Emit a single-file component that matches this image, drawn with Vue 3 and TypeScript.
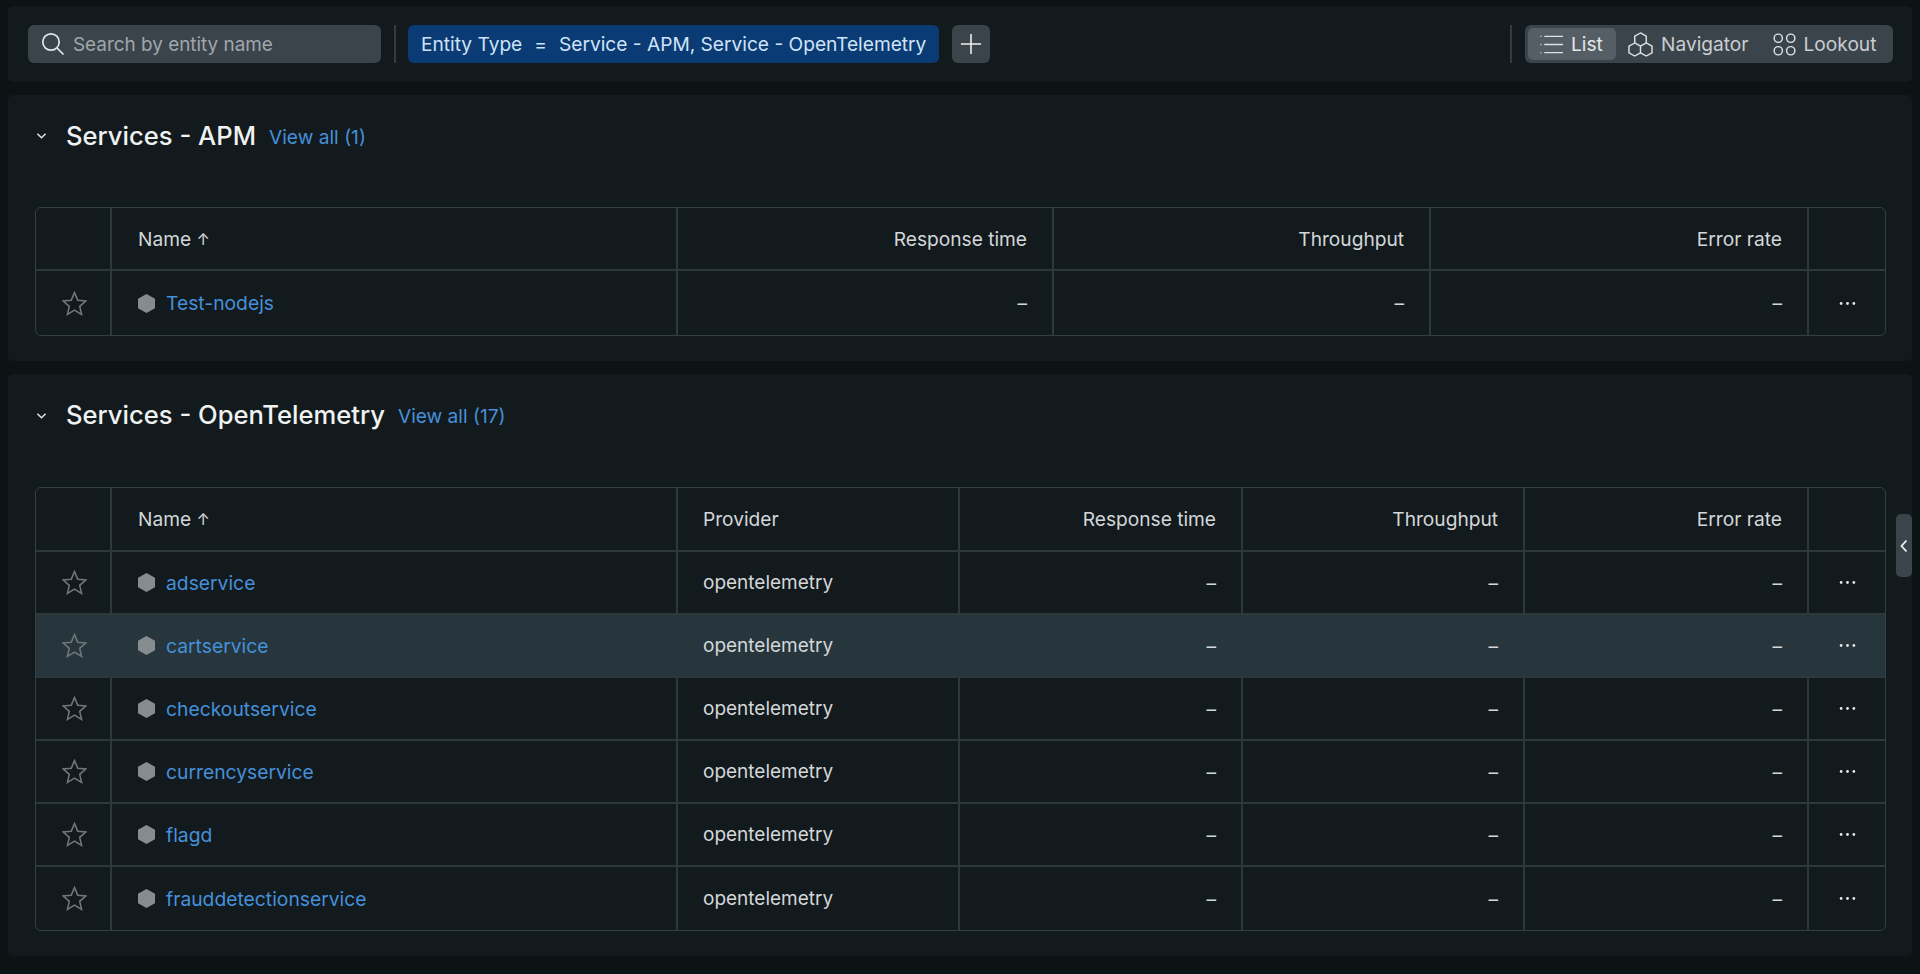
<script setup lang="ts">
interface Section {
  title: string
  viewAll: string
  kind: 'apm' | 'otel'
  rows: string[]
}

const sections: Section[] = [
  { title: 'Services - APM', viewAll: 'View all (1)', kind: 'apm', rows: ['Test-nodejs'] },
  {
    title: 'Services - OpenTelemetry',
    viewAll: 'View all (17)',
    kind: 'otel',
    rows: ['adservice', 'cartservice', 'checkoutservice', 'currencyservice', 'flagd', 'frauddetectionservice'],
  },
]

const metrics = ['Response time', 'Throughput', 'Error rate']
const hoveredRow = 'cartservice'
</script>

<template>
  <div class="page">
    <header class="toolbar">
      <div class="search">
        <svg class="search-icon" viewBox="0 0 24 24" fill="none">
          <circle cx="10" cy="10" r="8.2" />
          <path d="M16 16l6.5 6.5" />
        </svg>
        <span>Search by entity name</span>
      </div>
      <span class="divider" />
      <div class="chip">
        <span>Entity Type</span>
        <span>=</span>
        <span>Service - APM, Service - OpenTelemetry</span>
      </div>
      <button class="add-btn">
        <svg viewBox="0 0 24 24" fill="none"><path d="M12 1v22M1 12h22" /></svg>
      </button>
      <span class="spacer" />
      <span class="divider" />
      <div class="views">
        <div class="view view-active">
          <svg class="view-icon" viewBox="0 0 24 24" fill="none">
            <path d="M4.5 3.5H24M4.5 12H24M4.5 20.5H24" />
            <path class="dots" d="M0.5 3.5h1M0.5 12h1M0.5 20.5h1" />
          </svg>
          <span>List</span>
        </div>
        <div class="view">
          <svg class="view-icon hex-icon" viewBox="0 0 26 26" fill="none">
            <path d="M13 1l6 3.400v6.800l-6 3.400-6-3.400V4.400zM7 11.400l6 3.400v6.800l-6 3.400-6-3.400v-6.800zM19 11.400l6 3.400v6.800l-6 3.400-6-3.400v-6.800z" />
          </svg>
          <span>Navigator</span>
        </div>
        <div class="view">
          <svg class="view-icon" viewBox="0 0 24 24" fill="none">
            <circle cx="5.500" cy="5.500" r="4.300" />
            <circle cx="18.500" cy="5.500" r="4.300" />
            <circle cx="5.500" cy="18.500" r="4.300" />
            <circle cx="18.500" cy="18.500" r="4.300" />
          </svg>
          <span>Lookout</span>
        </div>
      </div>
    </header>

    <section v-for="section in sections" :key="section.title" class="panel" :class="`panel-${section.kind}`">
      <div class="panel-head">
        <svg class="chevron" viewBox="0 0 12 8" fill="none"><path d="M1.500 1.500L6 6l4.500-4.500" /></svg>
        <h2>{{ section.title }}</h2>
        <a class="view-all">{{ section.viewAll }}</a>
      </div>

      <div class="table" :class="`table-${section.kind}`">
        <div class="row row-head">
          <div class="cell" />
          <div class="cell name-head">Name <span class="sort">↑</span></div>
          <div v-if="section.kind === 'otel'" class="cell">Provider</div>
          <div v-for="metric in metrics" :key="metric" class="cell num">{{ metric }}</div>
          <div class="cell" />
        </div>
        <div
          v-for="name in section.rows"
          :key="name"
          class="row"
          :class="{ 'row-hover': name === hoveredRow }"
        >
          <div class="cell center">
            <svg class="star" viewBox="0 0 24 24" fill="none">
              <path d="M12 1.500l3.100 7.300 7.900.7-6 5.200 1.800 7.800L12 18.400l-6.800 4.100L7 14.700l-6-5.200 7.900-.7z" />
            </svg>
          </div>
          <div class="cell name">
            <svg class="hex" viewBox="0 0 16 19" preserveAspectRatio="none"><path d="M8 0l8 4.750v9.500L8 19l-8-4.750v-9.500z" /></svg>
            <a>{{ name }}</a>
          </div>
          <div v-if="section.kind === 'otel'" class="cell provider">opentelemetry</div>
          <div v-for="metric in metrics" :key="metric" class="cell num">–</div>
          <div class="cell center">
            <svg class="more" viewBox="0 0 16 4"><circle cx="2" cy="2" r="1.300" /><circle cx="8" cy="2" r="1.300" /><circle cx="14" cy="2" r="1.300" /></svg>
          </div>
        </div>
      </div>
    </section>

    <button class="side-handle">
      <svg viewBox="0 0 8 14" fill="none"><path d="M6.500 1.500L1.500 7l5 5.500" /></svg>
    </button>
  </div>
</template>

<style>
html,
body {
  margin: 0;
  background: #0c1315;
}
</style>

<style scoped>
.page {
  position: relative;
  box-sizing: border-box;
  height: 974px;
  overflow: hidden;
  padding: 6px 8px 0;
  display: flex;
  flex-direction: column;
  gap: 13px;
  background: #0c1315;
  font-family: Inter, 'Liberation Sans', sans-serif;
  font-size: 19.150px;
  color: #d3d7d9;
}

.toolbar {
  box-sizing: border-box;
  height: 76px;
  padding: 19px 19px 19px 20px;
  display: flex;
  align-items: center;
  gap: 13px;
  background: #131a1d;
  border-radius: 5px;
}

.search {
  box-sizing: border-box;
  width: 353px;
  height: 38px;
  padding-left: 13px;
  display: flex;
  align-items: center;
  gap: 8px;
  background: #3c444b;
  border-radius: 6px;
  color: #a0a7ab;
  font-size: 18.900px;
}

.search-icon {
  width: 24px;
  height: 24px;
}

.search-icon circle,
.search-icon path {
  stroke: #e3e6e7;
  stroke-width: 1.700;
}

.divider {
  width: 2px;
  height: 38px;
  background: #333b40;
}

.chip {
  box-sizing: border-box;
  height: 38px;
  margin-left: -1px;
  padding: 0 13px 0 13px;
  display: flex;
  align-items: center;
  gap: 12px;
  background: #0b3b74;
  border-radius: 6px;
  color: #cfe3f7;
}

.add-btn {
  width: 38px;
  height: 38px;
  padding: 8px;
  border: 0;
  background: #3c444b;
  border-radius: 6px;
  display: flex;
}

.add-btn svg {
  width: 22px;
  height: 22px;
}

.add-btn path {
  stroke: #eef0f1;
  stroke-width: 1.700;
}

.spacer {
  flex: 1;
}

.views {
  box-sizing: border-box;
  height: 38px;
  width: 368px;
  padding: 3px;
  display: flex;
  align-items: stretch;
  background: #3c444b;
  border-radius: 6px;
  color: #c9ced1;
}

.view {
  display: flex;
  align-items: center;
  gap: 8px;
  padding: 0 12px;
}

.view-active {
  width: 88px;
  box-sizing: border-box;
  background: #565e65;
  border-radius: 5px;
  color: #e3e6e7;
}

.view-icon {
  width: 23px;
  height: 23px;
  flex: none;
}

.hex-icon {
  width: 25px;
  height: 25px;
}

.view-icon path,
.view-icon circle {
  stroke: #dfe2e4;
  stroke-width: 1.500;
}

.panel {
  box-sizing: border-box;
  padding: 22px 26px 24.500px 27px;
  background: #131a1d;
  border-radius: 5px;
}

.panel-apm {
  padding-top: 21px;
  padding-bottom: 24.700px;
}

.panel-head {
  height: 38px;
  margin-bottom: 53px;
  display: flex;
  align-items: center;
}

.chevron {
  width: 11px;
  height: 8px;
  margin: 2px 19px 0 1px;
}

.chevron path {
  stroke: #e3e6e7;
  stroke-width: 1.600;
}

h2 {
  margin: 0 13px 0 0;
  font-size: 25.600px;
  font-weight: 500;
  color: #f0f2f2;
}

.view-all {
  margin-top: 3px;
  color: #4590da;
}

.table {
  box-sizing: border-box;
  border: 1px solid #343d41;
  border-radius: 6px;
  overflow: hidden;
}

.row {
  display: grid;
  box-sizing: border-box;
  height: 63.050px;
  border-bottom: 2px solid #2e373b;
}

.row:last-child {
  border-bottom: 0;
}

.row-head {
  height: 63px;
}

.table-otel .row-head {
  height: 64.300px;
}

.table-apm .row:last-child {
  height: 64px;
}

.table-apm .row {
  grid-template-columns: 76px 566px 376px 377px 378px 1fr;
}

.table-otel .row {
  grid-template-columns: 76px 566px 282px 283px 282px 284px 1fr;
}

.cell {
  box-sizing: border-box;
  padding: 0 25px;
  display: flex;
  align-items: center;
  border-right: 2px solid #2e373b;
  min-width: 0;
  white-space: pre;
}

.cell:last-child {
  border-right: 0;
}

.num {
  justify-content: flex-end;
}

.center {
  padding: 0;
  justify-content: center;
}

.name-head {
  padding-left: 26px;
}

.sort {
  font-size: 16px;
}

.name {
  padding-left: 26px;
  gap: 11px;
}

.name a {
  color: #4590da;
  font-size: 19.300px;
}

.provider {
  font-size: 19px;
}

.hex {
  width: 17px;
  height: 19px;
  flex: none;
}

.hex path {
  fill: #858c90;
}

.star {
  width: 25px;
  height: 25px;
  margin-left: 3px;
}

.star path {
  stroke: #70777b;
  stroke-width: 1.500;
}

.more {
  width: 17px;
  height: 5px;
}

.more circle {
  fill: #e3e6e7;
}

.row-hover {
  background: #27363d;
}

.row-hover .cell {
  border-right-color: transparent;
}

.side-handle {
  position: absolute;
  top: 514px;
  right: 8px;
  width: 16px;
  height: 63px;
  padding: 0 4px;
  border: 0;
  background: #3c444b;
  border-radius: 5px;
  display: flex;
  align-items: center;
}

.side-handle svg {
  width: 8px;
  height: 14px;
}

.side-handle path {
  stroke: #eef0f1;
  stroke-width: 1.800;
}
</style>
